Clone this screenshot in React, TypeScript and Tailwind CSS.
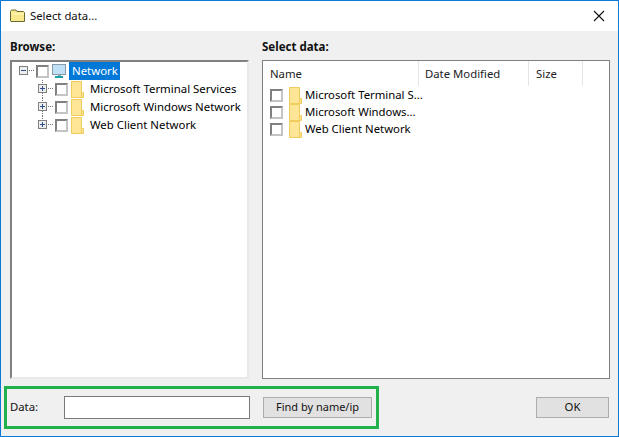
const font = "font-['Noto_Sans',sans-serif]";

const FolderIcon = () => (
  <svg width="13" height="17" viewBox="0 0 13 17" className="shrink-0">
    <path d="M0.5 0.5 L0.5 16.5 L12.5 16.5 L12.5 11.5 L10.5 11.5 L10.5 0.5 Z" fill="#ffe596" stroke="#f0cc5c" />
    <path d="M10.5 11.5 L10.5 16.5" stroke="#f0cc5c" />
  </svg>
);

const Check = () => (
  <div className="w-[13px] h-[13px] shrink-0 bg-white border-2 border-t-[#808080] border-l-[#808080] border-r-[#c4c4c4] border-b-[#c4c4c4]" />
);

const Expander = ({ open, up, down }: { open?: boolean; up?: boolean; down?: boolean }) => (
  <svg width="17" height="18" viewBox="0 0 17 18" className="shrink-0">
    {up && <path d="M4.5 0 V5" stroke="#707070" strokeDasharray="1 1" />}
    {down && <path d="M4.5 13 V18" stroke="#707070" strokeDasharray="1 1" />}
    <rect x="0.5" y="4.5" width="8" height="8" fill="#eeeeee" stroke="#808080" />
    <path d="M2 8.5 H7" stroke="#2f4f90" />
    {!open && <path d="M4.5 6 V11" stroke="#2f4f90" />}
    <path d="M10 8.5 H15" stroke="#707070" strokeDasharray="1 1" />
  </svg>
);

const MonitorIcon = () => (
  <svg width="16" height="16" viewBox="0 0 16 16" className="shrink-0">
    <rect x="1.5" y="1.5" width="13" height="10" fill="#bfe0f7" stroke="#8a9aa8" />
    <rect x="7" y="12" width="3" height="1" fill="#8aa" />
    <rect x="4" y="13" width="8" height="2" fill="#18a0a8" />
  </svg>
);

const TreeRow = ({ label, last }: { label: string; last?: boolean }) => (
  <div className="flex items-center h-[18px] pl-[26px]">
    <Expander up down={!last} />
    <Check />
    <div className="ml-[3px]"><FolderIcon /></div>
    <span className="ml-[6px] text-[11.4px] text-black whitespace-nowrap">{label}</span>
  </div>
);

const ListRow = ({ label }: { label: string }) => (
  <div className="flex items-center h-[17px] pl-[7px]">
    <Check />
    <div className="ml-[6px]"><FolderIcon /></div>
    <span className="ml-[3px] text-[11.33px] text-black whitespace-nowrap">{label}</span>
  </div>
);

const Header = ({ label, className }: { label: string; className: string }) => (
  <div className={`${className} h-[25px] pt-[1px] flex items-center text-[11.33px] text-[#222] border-r border-[#e5e5e5]`}>
    {label}
  </div>
);

export default function App() {
  return (
    <div className={`w-[619px] h-[437px] overflow-hidden flex flex-col bg-[#f0f0f0] border border-[#0a7ad6] ${font}`}>
      <div className="h-[30px] bg-white flex items-center pl-[9px] pr-[13px] shrink-0">
        <svg width="16" height="14" viewBox="0 0 16 14">
          <path d="M0.5 2.5 L1.5 1 L6 1 L7 2.5 L13.5 2.5 L14.5 3.5 L14.5 12.5 L1 12.5 L0.5 12 Z" fill="#f9e98c" stroke="#6a6a30" />
          <path d="M1.5 5 L14 5" stroke="#fff8c8" />
        </svg>
        <span className="ml-[4px] text-[11.33px] text-[#111]">Select data...</span>
        <svg width="12" height="12" viewBox="0 0 12 12" className="ml-auto">
          <path d="M1 1 L11 11 M11 1 L1 11" stroke="#111" strokeWidth="1.1" fill="none" />
        </svg>
      </div>

      <div className="flex flex-1 min-h-0 pl-[9px] pr-[8px] pt-[8px] gap-[13px]">
        <div className="w-[239px] flex flex-col">
          <div className="h-[21px] text-[11.5px] font-bold text-[#111] leading-[16px]">Browse:</div>
          <div className="flex-1 bg-white border-2 border-t-[#808080] border-l-[#808080] border-r-[#e8e8e8] border-b-[#e8e8e8]">
            <div className="flex items-center h-[18px] pl-[7px]">
              <Expander open />
              <Check />
              <div className="ml-[2px]"><MonitorIcon /></div>
              <span className="ml-[2px] bg-[#0078d7] text-white text-[11.4px] h-[18px] leading-[18px] pl-[3px] pr-[2px]">Network</span>
            </div>
            <TreeRow label="Microsoft Terminal Services" />
            <TreeRow label="Microsoft Windows Network" />
            <TreeRow label="Web Client Network" last />
          </div>
        </div>

        <div className="flex-1 flex flex-col">
          <div className="h-[21px] text-[11.5px] font-bold text-[#111] leading-[16px]">Select data:</div>
          <div className="flex-1 bg-white border border-[#808080]">
            <div className="flex">
              <Header label="Name" className="w-[156px] pl-[7px]" />
              <Header label="Date Modified" className="w-[110px] pl-[6px]" />
              <Header label="Size" className="w-[54px] pl-[7px]" />
            </div>
            <div className="pt-[1px]">
              <ListRow label="Microsoft Terminal S..." />
              <ListRow label="Microsoft Windows..." />
              <ListRow label="Web Client Network" />
            </div>
          </div>
        </div>
      </div>

      <div className="flex items-center justify-between h-[57px] shrink-0 pl-[3px] pr-[9px]">
        <div className="w-[375px] h-[43px] flex items-center border-[3px] border-[#22b14c] pl-[3px]">
          <span className="w-[54px] text-[11.33px] text-[#111]">Data:</span>
          <div className="w-[186px] h-[23px] bg-white border border-[#7a7a7a]" />
          <button className="ml-[13px] w-[109px] h-[21px] bg-[#e1e1e1] border border-[#adadad] text-[11px] text-[#111]">Find by name/ip</button>
        </div>
        <button className="w-[73px] h-[21px] bg-[#e1e1e1] border border-[#adadad] text-[11.33px] text-[#111]">OK</button>
      </div>
    </div>
  );
}
